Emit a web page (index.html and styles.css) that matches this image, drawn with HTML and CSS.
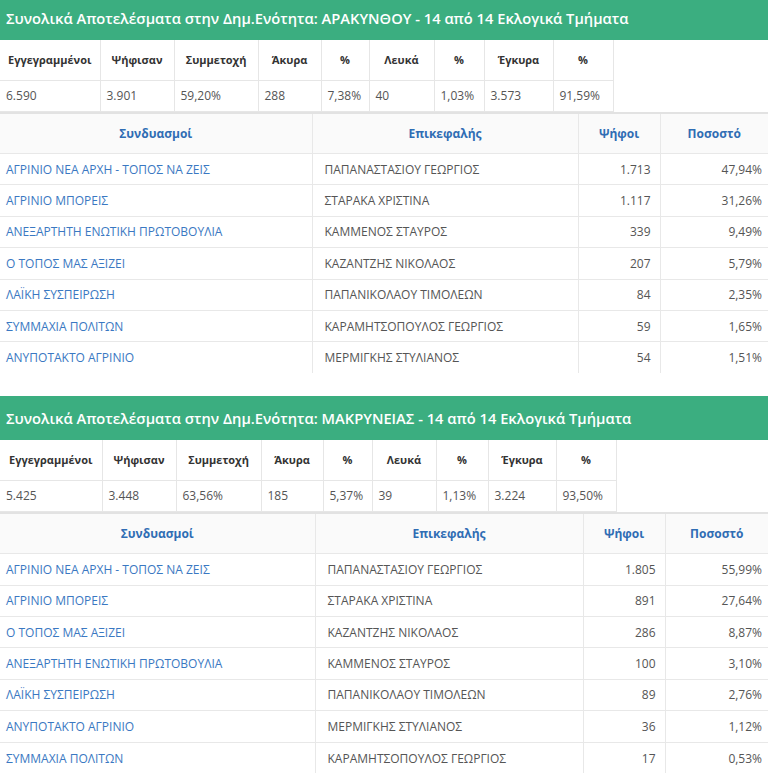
FILE: index.html
```html
<!DOCTYPE html>
<html lang="el">
<head>
<meta charset="utf-8">
<title>Αποτελέσματα</title>
<link rel="stylesheet" href="styles.css">
</head>
<body>
<div class="page">

<section class="block">
  <h2 class="title">Συνολικά Αποτελέσματα στην Δημ.Ενότητα: ΑΡΑΚΥΝΘΟΥ - 14 από 14 Εκλογικά Τμήματα</h2>
  <table class="stats">
    <tr><th>Εγγεγραμμένοι</th><th>Ψήφισαν</th><th>Συμμετοχή</th><th>Άκυρα</th><th>%</th><th>Λευκά</th><th>%</th><th>Έγκυρα</th><th>%</th></tr>
    <tr><td>6.590</td><td>3.901</td><td>59,20%</td><td>288</td><td>7,38%</td><td>40</td><td>1,03%</td><td>3.573</td><td>91,59%</td></tr>
  </table>
  <table class="results">
    <thead>
      <tr><th class="c1">Συνδυασμοί</th><th class="c2">Επικεφαλής</th><th class="c3">Ψήφοι</th><th class="c4">Ποσοστό</th></tr>
    </thead>
    <tbody>
      <tr><td class="name">ΑΓΡΙΝΙΟ ΝΕΑ ΑΡΧΗ - ΤΟΠΟΣ ΝΑ ΖΕΙΣ</td><td class="lead">ΠΑΠΑΝΑΣΤΑΣΙΟΥ ΓΕΩΡΓΙΟΣ</td><td class="num">1.713</td><td class="pct">47,94%</td></tr>
      <tr><td class="name">ΑΓΡΙΝΙΟ ΜΠΟΡΕΙΣ</td><td class="lead">ΣΤΑΡΑΚΑ ΧΡΙΣΤΙΝΑ</td><td class="num">1.117</td><td class="pct">31,26%</td></tr>
      <tr><td class="name">ΑΝΕΞΑΡΤΗΤΗ ΕΝΩΤΙΚΗ ΠΡΩΤΟΒΟΥΛΙΑ</td><td class="lead">ΚΑΜΜΕΝΟΣ ΣΤΑΥΡΟΣ</td><td class="num">339</td><td class="pct">9,49%</td></tr>
      <tr><td class="name">Ο ΤΟΠΟΣ ΜΑΣ ΑΞΙΖΕΙ</td><td class="lead">ΚΑΖΑΝΤΖΗΣ ΝΙΚΟΛΑΟΣ</td><td class="num">207</td><td class="pct">5,79%</td></tr>
      <tr><td class="name">ΛΑΪΚΗ ΣΥΣΠΕΙΡΩΣΗ</td><td class="lead">ΠΑΠΑΝΙΚΟΛΑΟΥ ΤΙΜΟΛΕΩΝ</td><td class="num">84</td><td class="pct">2,35%</td></tr>
      <tr><td class="name">ΣΥΜΜΑΧΙΑ ΠΟΛΙΤΩΝ</td><td class="lead">ΚΑΡΑΜΗΤΣΟΠΟΥΛΟΣ ΓΕΩΡΓΙΟΣ</td><td class="num">59</td><td class="pct">1,65%</td></tr>
      <tr><td class="name">ΑΝΥΠΟΤΑΚΤΟ ΑΓΡΙΝΙΟ</td><td class="lead">ΜΕΡΜΙΓΚΗΣ ΣΤΥΛΙΑΝΟΣ</td><td class="num">54</td><td class="pct">1,51%</td></tr>
    </tbody>
  </table>
</section>

<section class="block block-b">
  <h2 class="title">Συνολικά Αποτελέσματα στην Δημ.Ενότητα: ΜΑΚΡΥΝΕΙΑΣ - 14 από 14 Εκλογικά Τμήματα</h2>
  <table class="stats">
    <tr><th>Εγγεγραμμένοι</th><th>Ψήφισαν</th><th>Συμμετοχή</th><th>Άκυρα</th><th>%</th><th>Λευκά</th><th>%</th><th>Έγκυρα</th><th>%</th></tr>
    <tr><td>5.425</td><td>3.448</td><td>63,56%</td><td>185</td><td>5,37%</td><td>39</td><td>1,13%</td><td>3.224</td><td>93,50%</td></tr>
  </table>
  <table class="results">
    <thead>
      <tr><th class="c1">Συνδυασμοί</th><th class="c2">Επικεφαλής</th><th class="c3">Ψήφοι</th><th class="c4">Ποσοστό</th></tr>
    </thead>
    <tbody>
      <tr><td class="name">ΑΓΡΙΝΙΟ ΝΕΑ ΑΡΧΗ - ΤΟΠΟΣ ΝΑ ΖΕΙΣ</td><td class="lead">ΠΑΠΑΝΑΣΤΑΣΙΟΥ ΓΕΩΡΓΙΟΣ</td><td class="num">1.805</td><td class="pct">55,99%</td></tr>
      <tr><td class="name">ΑΓΡΙΝΙΟ ΜΠΟΡΕΙΣ</td><td class="lead">ΣΤΑΡΑΚΑ ΧΡΙΣΤΙΝΑ</td><td class="num">891</td><td class="pct">27,64%</td></tr>
      <tr><td class="name">Ο ΤΟΠΟΣ ΜΑΣ ΑΞΙΖΕΙ</td><td class="lead">ΚΑΖΑΝΤΖΗΣ ΝΙΚΟΛΑΟΣ</td><td class="num">286</td><td class="pct">8,87%</td></tr>
      <tr><td class="name">ΑΝΕΞΑΡΤΗΤΗ ΕΝΩΤΙΚΗ ΠΡΩΤΟΒΟΥΛΙΑ</td><td class="lead">ΚΑΜΜΕΝΟΣ ΣΤΑΥΡΟΣ</td><td class="num">100</td><td class="pct">3,10%</td></tr>
      <tr><td class="name">ΛΑΪΚΗ ΣΥΣΠΕΙΡΩΣΗ</td><td class="lead">ΠΑΠΑΝΙΚΟΛΑΟΥ ΤΙΜΟΛΕΩΝ</td><td class="num">89</td><td class="pct">2,76%</td></tr>
      <tr><td class="name">ΑΝΥΠΟΤΑΚΤΟ ΑΓΡΙΝΙΟ</td><td class="lead">ΜΕΡΜΙΓΚΗΣ ΣΤΥΛΙΑΝΟΣ</td><td class="num">36</td><td class="pct">1,12%</td></tr>
      <tr><td class="name">ΣΥΜΜΑΧΙΑ ΠΟΛΙΤΩΝ</td><td class="lead">ΚΑΡΑΜΗΤΣΟΠΟΥΛΟΣ ΓΕΩΡΓΙΟΣ</td><td class="num">17</td><td class="pct">0,53%</td></tr>
    </tbody>
  </table>
</section>

</div>
</body>
</html>
```

FILE: styles.css
```css
html, body {
  margin: 0;
  padding: 0;
  background: #fff;
}
body {
  font-family: "Open Sans", "Noto Sans", "DejaVu Sans", sans-serif;
  font-size: 12px;
  color: #555;
}
.page {
  margin-top: -4px;
  overflow: hidden;
}
.block {
  margin-bottom: 23px;
}
.title {
  margin: 0;
  height: 44px;
  box-sizing: border-box;
  padding: 0 6px 1px;
  display: flex;
  align-items: center;
  background: #3bae80;
  color: #fff;
  font-size: 14.7px;
  font-weight: 600;
  white-space: nowrap;
}

/* summary table */
.stats {
  border-collapse: collapse;
}
.stats th,
.stats td {
  box-sizing: border-box;
  border: 1px solid #e6e6e6;
  padding: 0 6px;
  line-height: 17px;
  white-space: nowrap;
}
.stats tr > :first-child {
  border-left: none;
}
.stats tr:first-child > * {
  border-top: none;
}
.stats th {
  height: 40px;
  text-align: center;
  font-size: 11px;
  font-weight: 700;
  color: #333;
}
.stats td {
  height: 31px;
  text-align: left;
  color: #555;
}
.stats th:nth-child(1) { width: 100px; }
.stats th:nth-child(2) { width: 74px; }
.stats th:nth-child(3) { width: 84px; }
.stats th:nth-child(4) { width: 63px; }
.stats th:nth-child(5) { width: 48px; }
.stats th:nth-child(6) { width: 65px; }
.stats th:nth-child(7) { width: 50px; }
.stats th:nth-child(8) { width: 69px; }
.stats th:nth-child(9) { width: 60px; }
.block-b .stats th:nth-child(1) { width: 102px; }
.block-b .stats th:nth-child(3) { width: 85px; }
.block-b .stats th:nth-child(4) { width: 62px; }
.block-b .stats th:nth-child(5) { width: 49px; }
.block-b .stats th:nth-child(6) { width: 64px; }
.block-b .stats th:nth-child(7) { width: 52px; }
.block-b .stats th:nth-child(8) { width: 68px; }

/* results table */
.results {
  width: 100%;
  border-collapse: collapse;
}
.results th,
.results td {
  box-sizing: border-box;
  border: 1px solid #e8e8e8;
  line-height: 17px;
  white-space: nowrap;
}
.results tr > :first-child {
  border-left: none;
}
.results tr > :last-child {
  border-right: none;
}
.results tbody tr:last-child td {
  border-bottom: none;
}
.results th {
  border-top: 2px solid #e2e2e2;
  background: #fafafa;
  height: 41px;
  padding: 0;
  font-weight: 700;
  color: #2f6db4;
  text-align: center;
}
.results td {
  height: 31.4px;
  padding: 0;
}
.c1 { width: 312px; }
.c2 { width: 266px; }
.c3 { width: 82px; }
.block-b .c1 { width: 315px; }
.block-b .c2 { width: 268px; }
.results td.name {
  padding-left: 6px;
  color: #3a78c2;
}
.results td.lead {
  padding-left: 12px;
  color: #555;
}
.results td.num {
  text-align: right;
  padding-right: 9px;
}
.results td.pct {
  text-align: right;
  padding-right: 6px;
}
```
